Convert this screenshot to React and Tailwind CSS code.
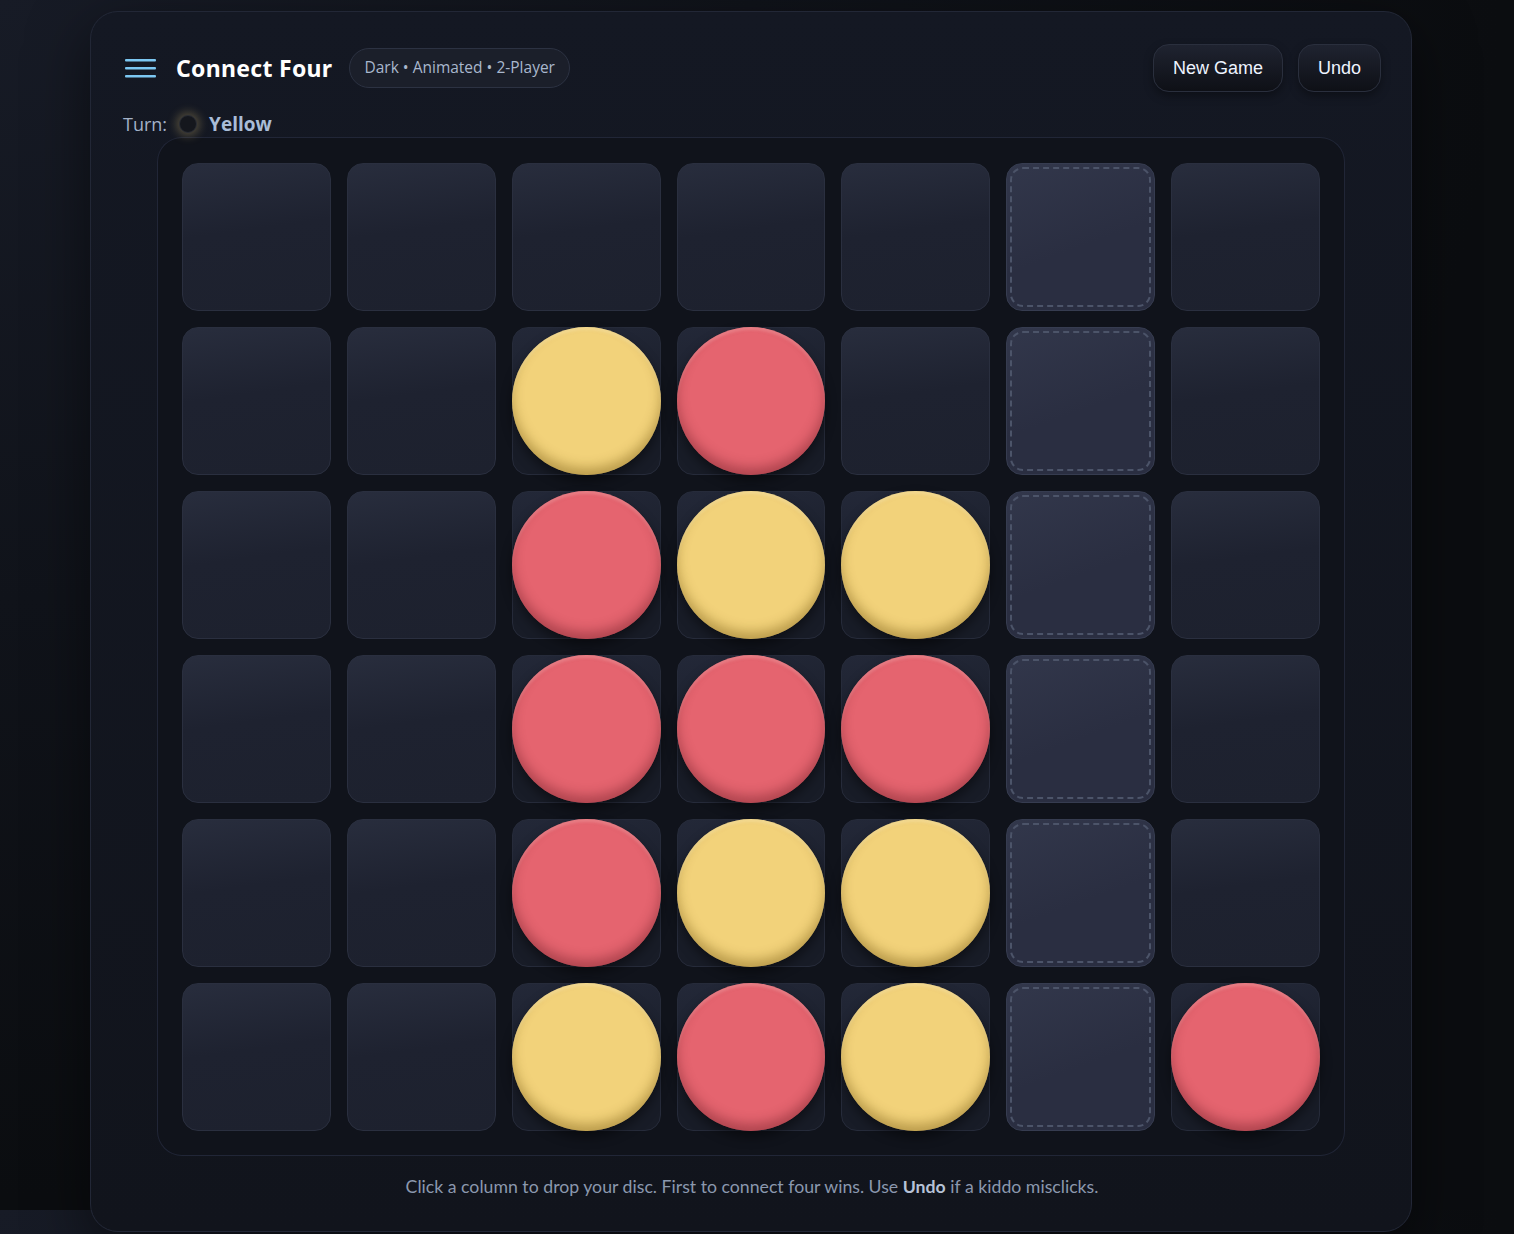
import React from 'react';

const Y = 'Y';
const R = 'R';
const _ = null;

const board = [
  [_, _, _, _, _, _, _],
  [_, _, Y, R, _, _, _],
  [_, _, R, Y, Y, _, _],
  [_, _, R, R, R, _, _],
  [_, _, R, Y, Y, _, _],
  [_, _, Y, R, Y, _, R],
];

const hoverCol = 5;

function Disc({ color }) {
  if (color === Y) {
    return (
      <div className="absolute -inset-px rounded-full bg-[#f2d27a] shadow-[inset_0_-7px_12px_rgba(120,90,20,0.45),inset_0_3px_3px_rgba(255,240,200,0.35),0_6px_12px_rgba(0,0,0,0.45)]" />
    );
  }
  return (
    <div className="absolute -inset-px rounded-full bg-[#e5646f] shadow-[inset_0_-7px_12px_rgba(110,30,40,0.45),inset_0_3px_3px_rgba(255,200,200,0.3),0_6px_12px_rgba(0,0,0,0.45)]" />
  );
}

function Cell({ value, col }) {
  const hovered = col === hoverCol && !value;
  if (hovered) {
    return (
      <div className="relative h-[148px] rounded-2xl border border-[#363c50] bg-[linear-gradient(160deg,#32374b,#2a2e41_55%)]">
        <div className="absolute inset-[3px] rounded-[13px] border-2 border-dashed border-[#4c5469]" />
      </div>
    );
  }
  if (value) {
    return (
      <div className="relative h-[148px] rounded-2xl border border-[#262b3a] bg-[linear-gradient(170deg,#232838,#181c27_70%)]">
        <Disc color={value} />
      </div>
    );
  }
  return (
    <div className="relative h-[148px] rounded-2xl border border-[#2a2f3f] bg-[linear-gradient(172deg,#282d3d,#1e2230_45%,#1d212e)]" />
  );
}

function Hamburger() {
  return (
    <svg width="32" height="20" viewBox="0 0 32 20" className="block">
      <rect x="0" y="1" width="31" height="2.4" rx="1" fill="#7cc7f2" />
      <rect x="0" y="9" width="31" height="2.4" rx="1" fill="#7cc7f2" />
      <rect x="0" y="17" width="31" height="2.4" rx="1" fill="#7cc7f2" />
    </svg>
  );
}

export default function App() {
  return (
    <div
      className="min-h-screen bg-[#0b0d11] bg-[radial-gradient(ellipse_at_0%_0%,#171b26_0%,#10131a_35%,#0b0d10_70%)] bg-[length:100%_1210px] bg-repeat pt-[11px] pl-[90px]"
      style={{ fontFamily: '"Liberation Sans", Arial, sans-serif' }}
    >
      <div className="w-[1322px] rounded-[28px] border border-[#222736] bg-[linear-gradient(180deg,#141823,#11141c)] pl-8 pr-[30px] pt-[32px] pb-[32px] shadow-[0_20px_60px_rgba(0,0,0,0.5)]">
        <div className="flex h-12 items-center justify-between">
          <div className="flex items-center">
            <div className="ml-[2px]">
              <Hamburger />
            </div>
            <h1
              className="ml-[19px] text-[23px] font-bold tracking-[0.3px] text-white"
              style={{ fontFamily: '"Noto Sans", "Open Sans", sans-serif' }}
            >
              Connect Four
            </h1>
            <span
              className="ml-[17px] flex h-10 items-center rounded-full border border-[#2c3242] bg-[#1b1f2a] px-[14px] text-[15.5px] text-[#a9b7cd]"
              style={{ fontFamily: '"Open Sans", "Noto Sans", sans-serif' }}
            >
              Dark • Animated • 2-Player
            </span>
          </div>
          <div className="flex items-center gap-[15px]">
            <button className="h-12 rounded-2xl border border-[#2a2f3d] bg-[linear-gradient(180deg,#1f2330,#0e1016)] px-[19px] text-[18px] text-[#eef4ff] shadow-[0_4px_10px_rgba(0,0,0,0.35)]">
              New Game
            </button>
            <button className="h-12 rounded-2xl border border-[#2a2f3d] bg-[linear-gradient(180deg,#1f2330,#0e1016)] px-[19px] text-[18px] text-[#eef4ff] shadow-[0_4px_10px_rgba(0,0,0,0.35)]">
              Undo
            </button>
          </div>
        </div>

        <div
          className="mt-[20px] flex h-6 items-center gap-3 text-[18px] text-[#a3b2c8]"
          style={{ fontFamily: '"Open Sans", "Noto Sans", sans-serif' }}
        >
          <span>Turn:</span>
          <span className="h-[18px] w-[18px] rounded-full border border-[#2a2d35] bg-[#15171d] shadow-[0_0_10px_3px_rgba(242,210,122,0.28)]" />
          <span className="text-[19px] font-bold text-[#a9bdd8]">Yellow</span>
        </div>

        <div className="ml-[35px] mt-[2px] w-[1186px] rounded-[24px] bg-[#10131b] px-6 pt-[25px] pb-6 shadow-[0_0_0_1px_#212637]">
          <div className="grid grid-cols-7 gap-4">
            {board.map((row, r) =>
              row.map((v, c) => <Cell key={r + '-' + c} value={v} col={c} />)
            )}
          </div>
        </div>

        <p
          className="mt-[20px] text-center text-[17.7px] leading-6 text-[#8b98ae]"
          style={{ fontFamily: 'Lato, "Open Sans", sans-serif' }}
        >
          Click a column to drop your disc. First to connect four wins. Use{' '}
          <b className="font-bold text-[#b6c2d6]">Undo</b> if a kiddo misclicks.
        </p>
      </div>
    </div>
  );
}
